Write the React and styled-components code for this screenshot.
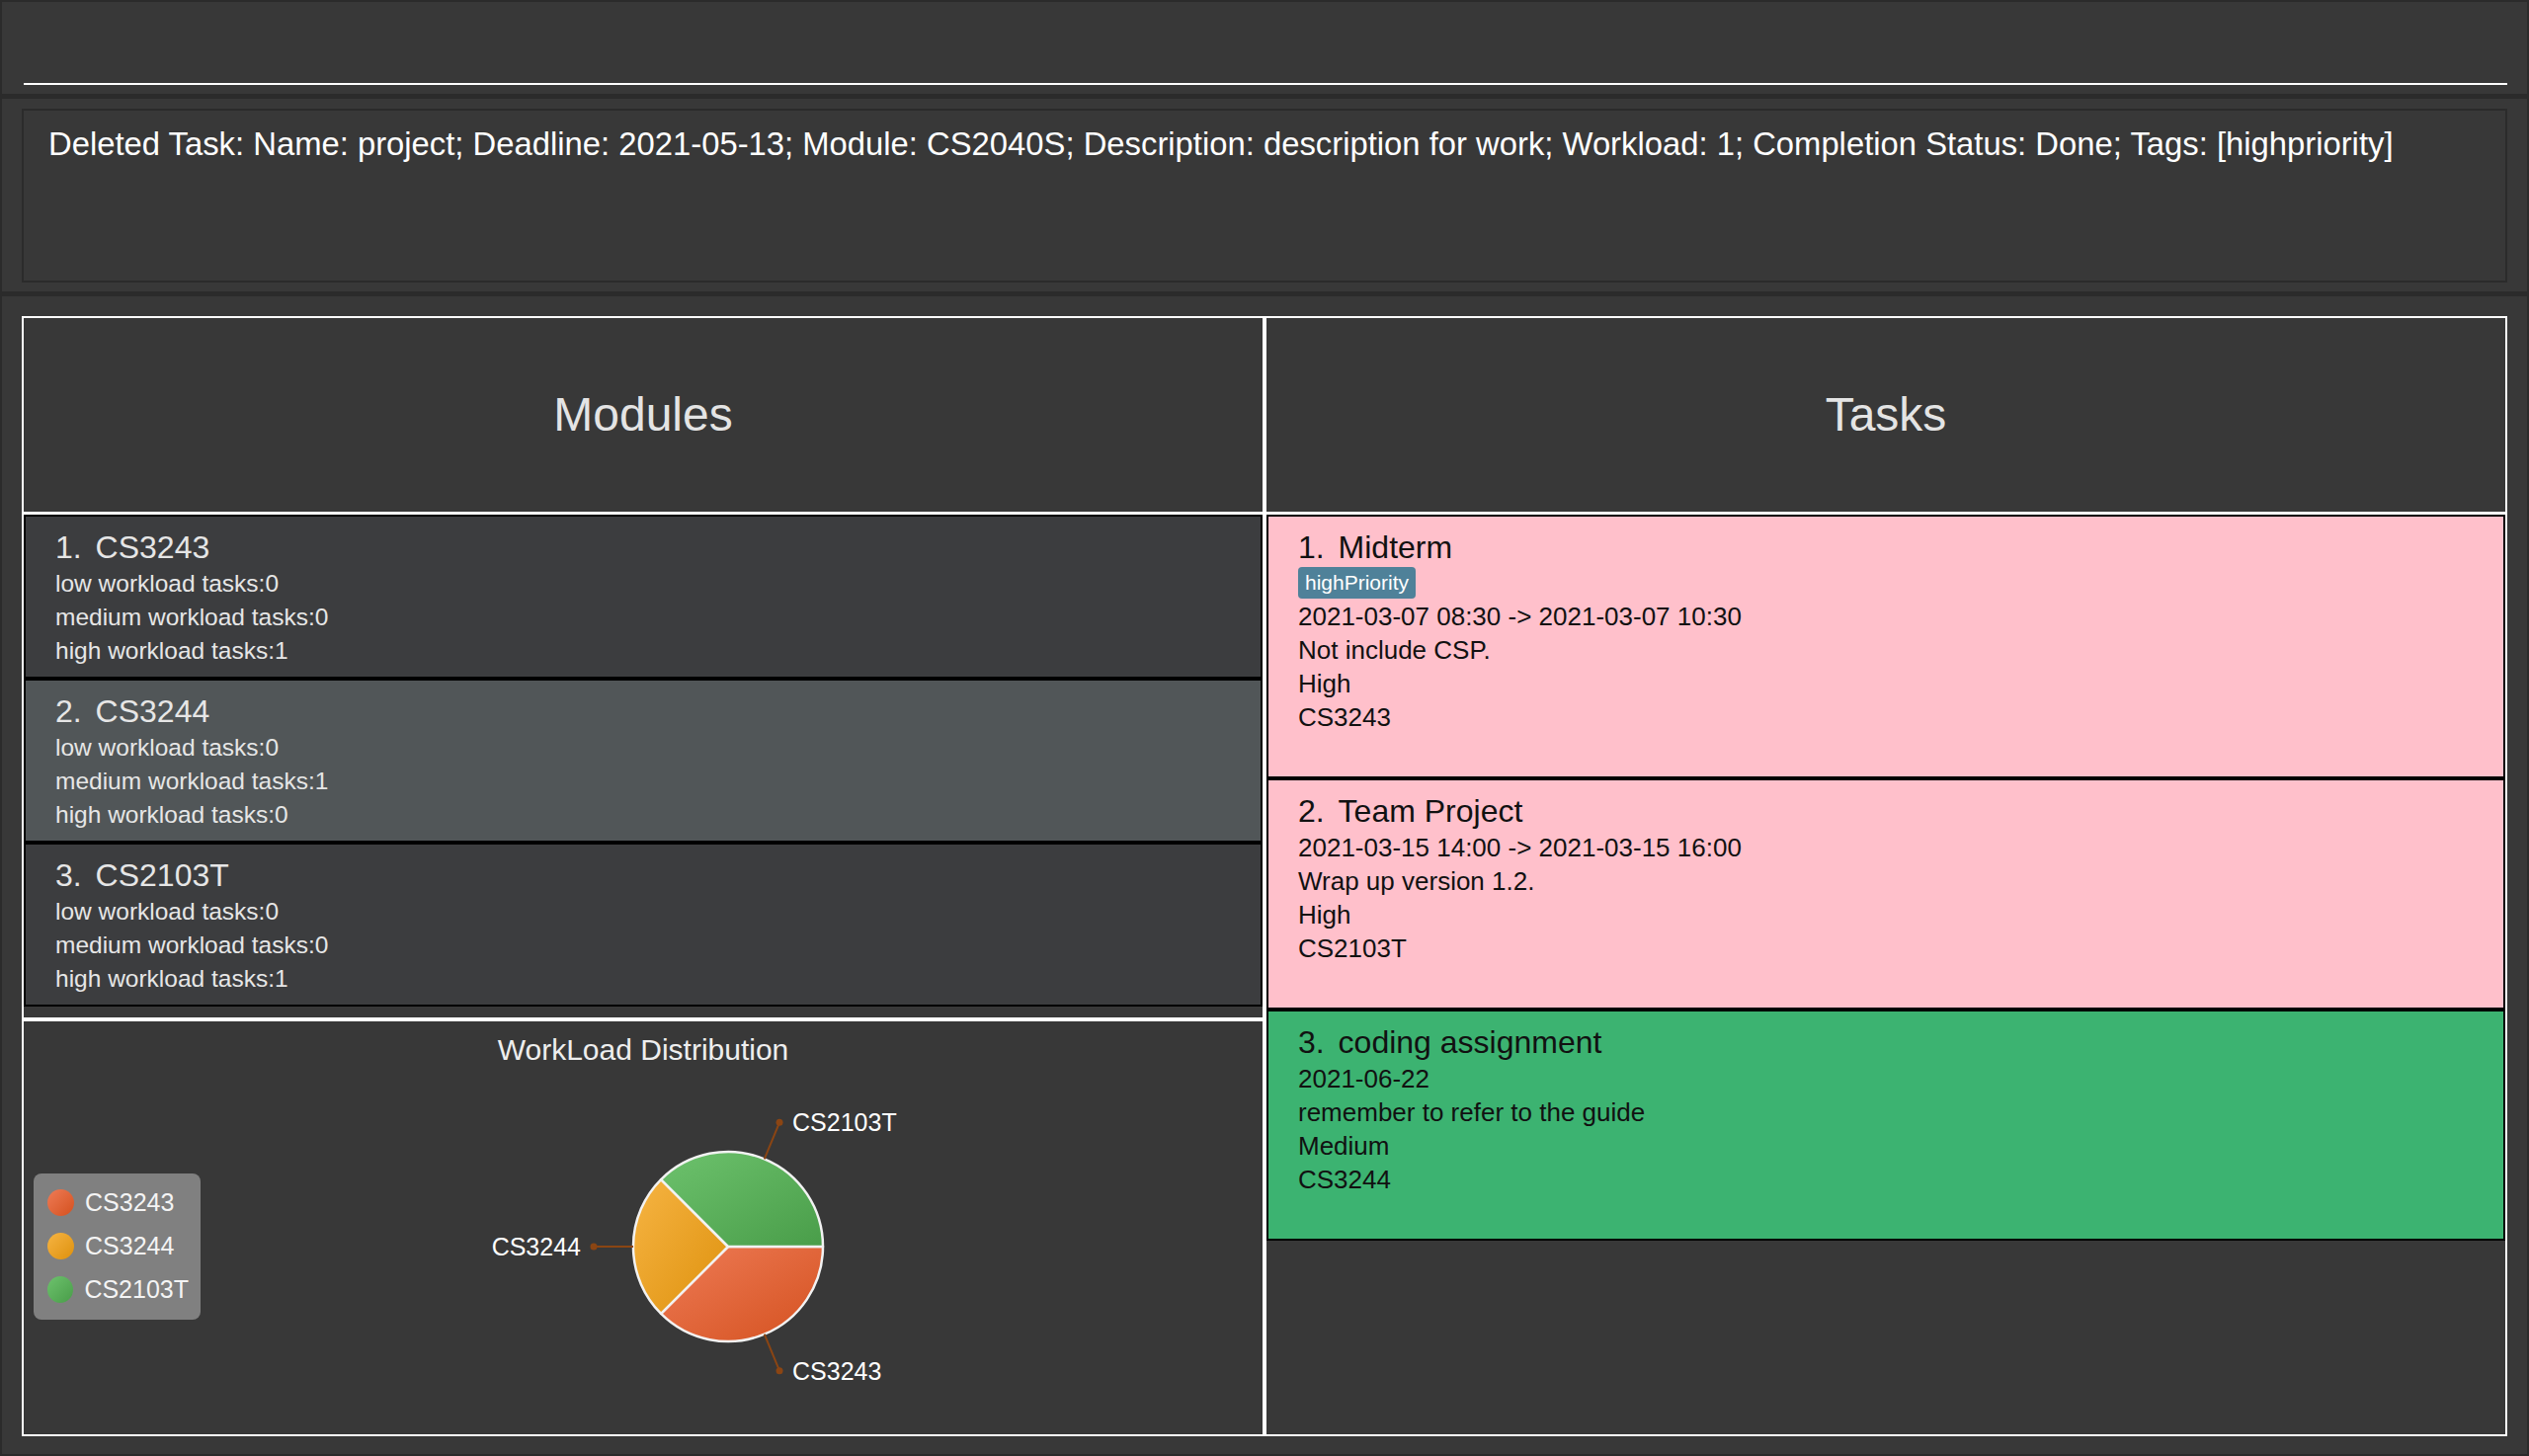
import React from 'react';
import styled, { createGlobalStyle } from 'styled-components';

const GlobalStyle = createGlobalStyle`
  html, body {
    margin: 0;
    padding: 0;
    background: #2b2b2b;
  }
  body {
    font-family: "Liberation Sans", Arial, sans-serif;
  }
  * {
    box-sizing: border-box;
  }
`;

const modules = [
  { code: 'CS3243', low: 0, medium: 0, high: 1 },
  { code: 'CS3244', low: 0, medium: 1, high: 0, selected: true },
  { code: 'CS2103T', low: 0, medium: 0, high: 1 },
];

const tasks = [
  { name: 'Midterm', tag: 'highPriority', when: '2021-03-07 08:30 -> 2021-03-07 10:30', desc: 'Not include CSP.', load: 'High', module: 'CS3243', done: false },
  { name: 'Team Project', when: '2021-03-15 14:00 -> 2021-03-15 16:00', desc: 'Wrap up version 1.2.', load: 'High', module: 'CS2103T', done: false },
  { name: 'coding assignment', when: '2021-06-22', desc: 'remember to refer to the guide', load: 'Medium', module: 'CS3244', done: true },
];

// workload weights: high = 3, medium = 2
const slices = [
  { label: 'CS3243', value: 3, light: '#ee7b56', dark: '#d4511f' },
  { label: 'CS3244', value: 2, light: '#f6b443', dark: '#de910d' },
  { label: 'CS2103T', value: 3, light: '#6dc26d', dark: '#499d49' },
];

const Window = styled.div`
  width: 2560px;
  height: 1474px;
  padding: 2px;
  display: flex;
  flex-direction: column;
  gap: 5px;
  background: #2b2b2b;
`;

const CommandSection = styled.div`
  height: 93px;
  background: #383838;
  display: flex;
  align-items: flex-end;
  padding: 0 20px 9px 22px;
`;

const CommandInput = styled.div`
  flex: 1;
  height: 46px;
  border-bottom: 2px solid #ffffff;
`;

const ResultSection = styled.div`
  height: 195px;
  background: #383838;
  padding: 10px 20px 9px 20px;
`;

const ResultBox = styled.div`
  height: 100%;
  border: 2px solid #2b2b2b;
  padding: 15px 25px;
  color: #ffffff;
  font-size: 32.8px;
  line-height: 38px;
  white-space: nowrap;
`;

const MainSection = styled.div`
  flex: 1;
  background: #383838;
  padding: 20px 20px 18px 20px;
  display: grid;
  grid-template-columns: 1fr 1fr;
`;

const Panel = styled.div`
  border: 2px solid #ffffff;
  display: flex;
  flex-direction: column;
  min-height: 0;
`;

const PanelHeader = styled.div`
  height: 199px;
  border-bottom: 3px solid #ffffff;
  display: flex;
  align-items: center;
  justify-content: center;
  color: #e4e4e4;
  font-size: 48px;
  padding-bottom: 2px;
`;

const ModuleList = styled.div`
  height: 509px;
  display: flex;
  flex-direction: column;
`;

const Cell = styled.div`
  border: 2px solid #000000;
  background: ${p => p.bg};
  color: ${p => p.fg};
  padding: 11px 28px ${p => p.pb}px 30px;
`;

const CellTitle = styled.div`
  font-size: 32px;
  line-height: 40px;
  white-space: nowrap;
`;

const Index = styled.span`
  margin-right: 5px;
`;

const ModuleLine = styled.div`
  font-size: 24.5px;
  line-height: 34px;
`;

const TaskLine = styled.div`
  font-size: 26px;
  line-height: 34px;
`;

const TagRow = styled.div`
  height: 33px;
  display: flex;
  align-items: flex-start;
`;

const Tag = styled.span`
  height: 32px;
  line-height: 32px;
  padding: 0 7px;
  border-radius: 4px;
  background: #4f8199;
  color: #ffffff;
  font-size: 21px;
`;

const TaskList = styled.div`
  flex: 1;
  display: flex;
  flex-direction: column;
`;

const ChartSection = styled.div`
  flex: 1;
  border-top: 4px solid #ffffff;
  display: flex;
  flex-direction: column;
`;

const ChartTitle = styled.div`
  padding-top: 11px;
  height: 47px;
  line-height: 36px;
  text-align: center;
  color: #eeeeee;
  font-size: 30px;
`;

const ChartBody = styled.div`
  flex: 1;
  display: flex;
  align-items: center;
`;

const Legend = styled.div`
  margin: 0 0 10px 10px;
  width: 169px;
  padding: 8px 12px 8px 14px;
  background: #808080;
  border-radius: 8px;
  display: flex;
  flex-direction: column;
`;

const LegendItem = styled.div`
  height: 44px;
  display: flex;
  align-items: center;
  gap: 11px;
  color: #f4f4f4;
  font-size: 25px;
`;

const Dot = styled.span`
  width: 27px;
  height: 27px;
  border-radius: 50%;
  background: linear-gradient(135deg, ${p => p.light}, ${p => p.dark});
`;

const PieSvg = styled.svg`
  display: block;
  flex: none;
`;

function PieChart() {
  const cx = 534;
  const cy = 181;
  const r = 96;
  const total = slices.reduce((s, x) => s + x.value, 0);
  let start = 0;
  const parts = slices.map((s, i) => {
    const sweep = (s.value / total) * Math.PI * 2;
    const a0 = start;
    const a1 = start + sweep;
    start = a1;
    const mid = (a0 + a1) / 2;
    const x0 = cx + r * Math.cos(a0);
    const y0 = cy + r * Math.sin(a0);
    const x1 = cx + r * Math.cos(a1);
    const y1 = cy + r * Math.sin(a1);
    const large = sweep > Math.PI ? 1 : 0;
    const ex = cx + r * Math.cos(mid);
    const ey = cy + r * Math.sin(mid);
    const dx = cx + (r + 40) * Math.cos(mid);
    const dy = cy + (r + 40) * Math.sin(mid);
    const right = Math.cos(mid) >= 0;
    return { ...s, i, d: `M${cx},${cy} L${x0},${y0} A${r},${r} 0 ${large} 1 ${x1},${y1} Z`, ex, ey, dx, dy, right };
  });

  return (
    <PieSvg width="1075" height="371" viewBox="0 0 1075 371">
      <defs>
        {parts.map(p => (
          <linearGradient key={p.label} id={`g${p.i}`} x1="0" y1="0" x2="1" y2="1">
            <stop offset="0" stopColor={p.light} />
            <stop offset="1" stopColor={p.dark} />
          </linearGradient>
        ))}
      </defs>
      {parts.map(p => (
        <path key={p.label} d={p.d} fill={`url(#g${p.i})`} stroke="#f2f2f2" strokeWidth="2.5" strokeLinejoin="round" />
      ))}
      {parts.map(p => (
        <g key={`l${p.label}`}>
          <line x1={p.ex} y1={p.ey} x2={p.dx} y2={p.dy} stroke="#8b4513" strokeWidth="2" />
          <circle cx={p.dx} cy={p.dy} r="3.5" fill="#8b4513" />
          <text
            x={p.right ? p.dx + 13 : p.dx - 13}
            y={p.dy + 9}
            textAnchor={p.right ? 'start' : 'end'}
            fill="#ffffff"
            fontSize="25"
            fontFamily='"Liberation Sans", Arial, sans-serif'
          >
            {p.label}
          </text>
        </g>
      ))}
    </PieSvg>
  );
}

export default function App() {
  return (
    <>
      <GlobalStyle />
      <Window>
        <CommandSection>
          <CommandInput />
        </CommandSection>
        <ResultSection>
          <ResultBox>
            Deleted Task: Name: project; Deadline: 2021-05-13; Module: CS2040S; Description: description for work; Workload: 1; Completion Status: Done; Tags: [highpriority]
          </ResultBox>
        </ResultSection>
        <MainSection>
          <Panel>
            <PanelHeader>Modules</PanelHeader>
            <ModuleList>
              {modules.map((m, i) => (
                <Cell key={m.code} bg={m.selected ? '#515658' : '#3c3d3f'} fg="#e6e6e6" pb={9}>
                  <CellTitle><Index>{i + 1}. </Index>{m.code}</CellTitle>
                  <ModuleLine>low workload tasks:{m.low}</ModuleLine>
                  <ModuleLine>medium workload tasks:{m.medium}</ModuleLine>
                  <ModuleLine>high workload tasks:{m.high}</ModuleLine>
                </Cell>
              ))}
            </ModuleList>
            <ChartSection>
              <ChartTitle>WorkLoad Distribution</ChartTitle>
              <ChartBody>
                <Legend>
                  {slices.map(s => (
                    <LegendItem key={s.label}>
                      <Dot light={s.light} dark={s.dark} />
                      {s.label}
                    </LegendItem>
                  ))}
                </Legend>
                <PieChart />
              </ChartBody>
            </ChartSection>
          </Panel>
          <Panel>
            <PanelHeader>Tasks</PanelHeader>
            <TaskList>
              {tasks.map((t, i) => (
                <Cell key={t.name} bg={t.done ? '#3cb371' : '#ffc0cb'} fg="#111111" pb={43}>
                  <CellTitle><Index>{i + 1}. </Index>{t.name}</CellTitle>
                  {t.tag && (
                    <TagRow><Tag>{t.tag}</Tag></TagRow>
                  )}
                  <TaskLine>{t.when}</TaskLine>
                  <TaskLine>{t.desc}</TaskLine>
                  <TaskLine>{t.load}</TaskLine>
                  <TaskLine>{t.module}</TaskLine>
                </Cell>
              ))}
            </TaskList>
          </Panel>
        </MainSection>
      </Window>
    </>
  );
}
